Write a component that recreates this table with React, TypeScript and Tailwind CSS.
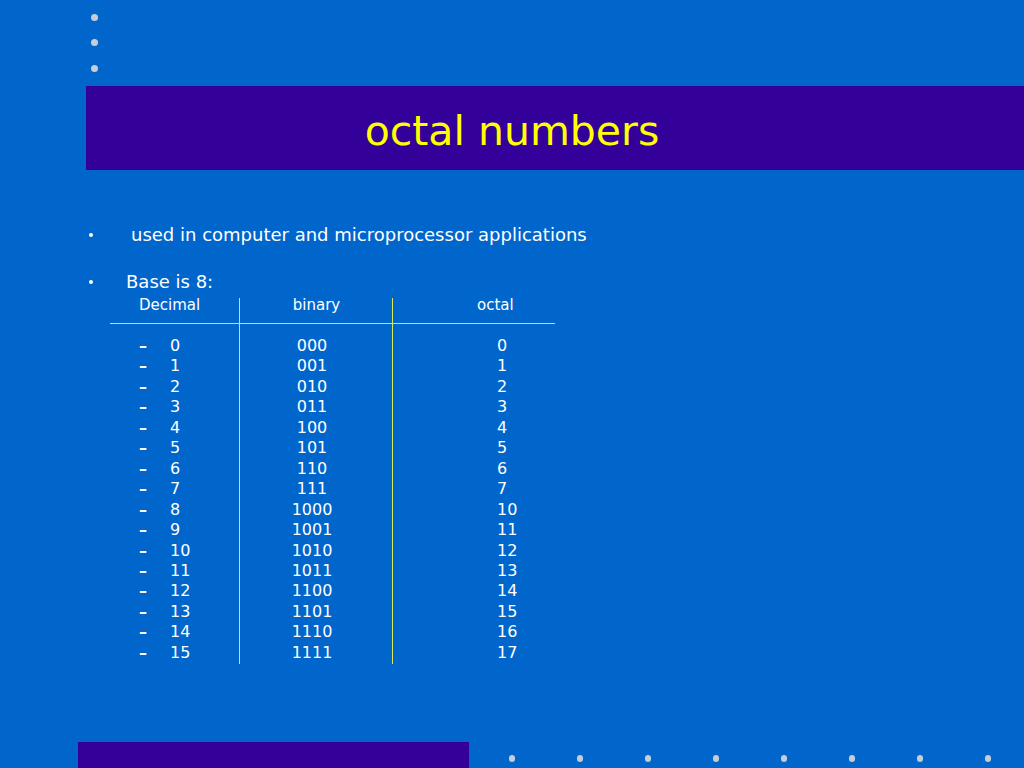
const rows: [string, string, string][] = [
  ["0", "000", "0"],
  ["1", "001", "1"],
  ["2", "010", "2"],
  ["3", "011", "3"],
  ["4", "100", "4"],
  ["5", "101", "5"],
  ["6", "110", "6"],
  ["7", "111", "7"],
  ["8", "1000", "10"],
  ["9", "1001", "11"],
  ["10", "1010", "12"],
  ["11", "1011", "13"],
  ["12", "1100", "14"],
  ["13", "1101", "15"],
  ["14", "1110", "16"],
  ["15", "1111", "17"],
];

function Dot() {
  return <div className="w-[7px] h-[7px] rounded-full bg-[#c8ccd8]" />;
}

function Bullet({ children, indent }: { children: React.ReactNode; indent: string }) {
  return (
    <div className="flex items-center">
      <span className="w-[4px] h-[4px] rounded-full bg-white ml-[89px]" />
      <span className={indent}>{children}</span>
    </div>
  );
}

export default function App() {
  return (
    <div className="w-[1024px] h-[768px] bg-[#0066cc] flex flex-col overflow-hidden font-['DejaVu_Sans',sans-serif] text-white">
      {/* top-left dots */}
      <div className="flex flex-col gap-[18.5px] pl-[90.5px] pt-[13.5px]">
        <Dot />
        <Dot />
        <Dot />
      </div>

      {/* title band */}
      <div className="ml-[86px] mt-[14.5px] h-[84px] bg-[#330099] flex items-center justify-center pr-[86px]">
        <h1 className="text-[41px] text-[#ffff00] leading-none pt-[6px]">octal numbers</h1>
      </div>

      {/* body */}
      <div className="mt-[53px] text-[18px] leading-[24px]">
        <Bullet indent="ml-[38px]">used in computer and microprocessor applications</Bullet>
      </div>
      <div className="mt-[22px] text-[18px] leading-[26px]">
        <Bullet indent="ml-[33px]">Base is 8:</Bullet>
      </div>

      <div className="ml-[110px] mt-[3px] w-[445px] text-[16px]">
        <div className="grid grid-cols-[129px_153px_163px] border-b border-[#c6e68c] h-[26px] leading-[14px] text-[15px]">
          <div className="pl-[29px]">Decimal</div>
          <div className="border-l border-[#d6ea5e] text-center pl-[1px]">binary</div>
          <div className="border-l border-[#d6ea5e] pl-[84px]">octal</div>
        </div>
        <div className="grid grid-cols-[129px_153px_163px] pt-[12px] pb-[1px] leading-[20.45px]">
          <div className="pl-[29px]">
            {rows.map(([d]) => (
              <div key={d} className="flex">
                <span className="w-[31px] font-bold">–</span>
                <span>{d}</span>
              </div>
            ))}
          </div>
          <div className="border-l border-[#d6ea5e] -mt-[12px] pt-[12px] -mb-[1px] pb-[1px] text-center pr-[8px]">
            {rows.map(([d, b]) => (
              <div key={d}>{b}</div>
            ))}
          </div>
          <div className="border-l border-[#d6ea5e] -mt-[12px] pt-[12px] -mb-[1px] pb-[1px] pl-[104px]">
            {rows.map(([d, , o]) => (
              <div key={d}>{o}</div>
            ))}
          </div>
        </div>
      </div>

      {/* bottom strip */}
      <div className="mt-auto flex items-end">
        <div className="ml-[78px] w-[391px] h-[26px] bg-[#330099]" />
        <div className="flex gap-[62px] ml-[40px] pb-[6px]">
          {Array.from({ length: 8 }).map((_, i) => (
            <div key={i} className="w-[6px] h-[7px] rounded-full bg-[#c8ccd8]" />
          ))}
        </div>
      </div>
    </div>
  );
}
